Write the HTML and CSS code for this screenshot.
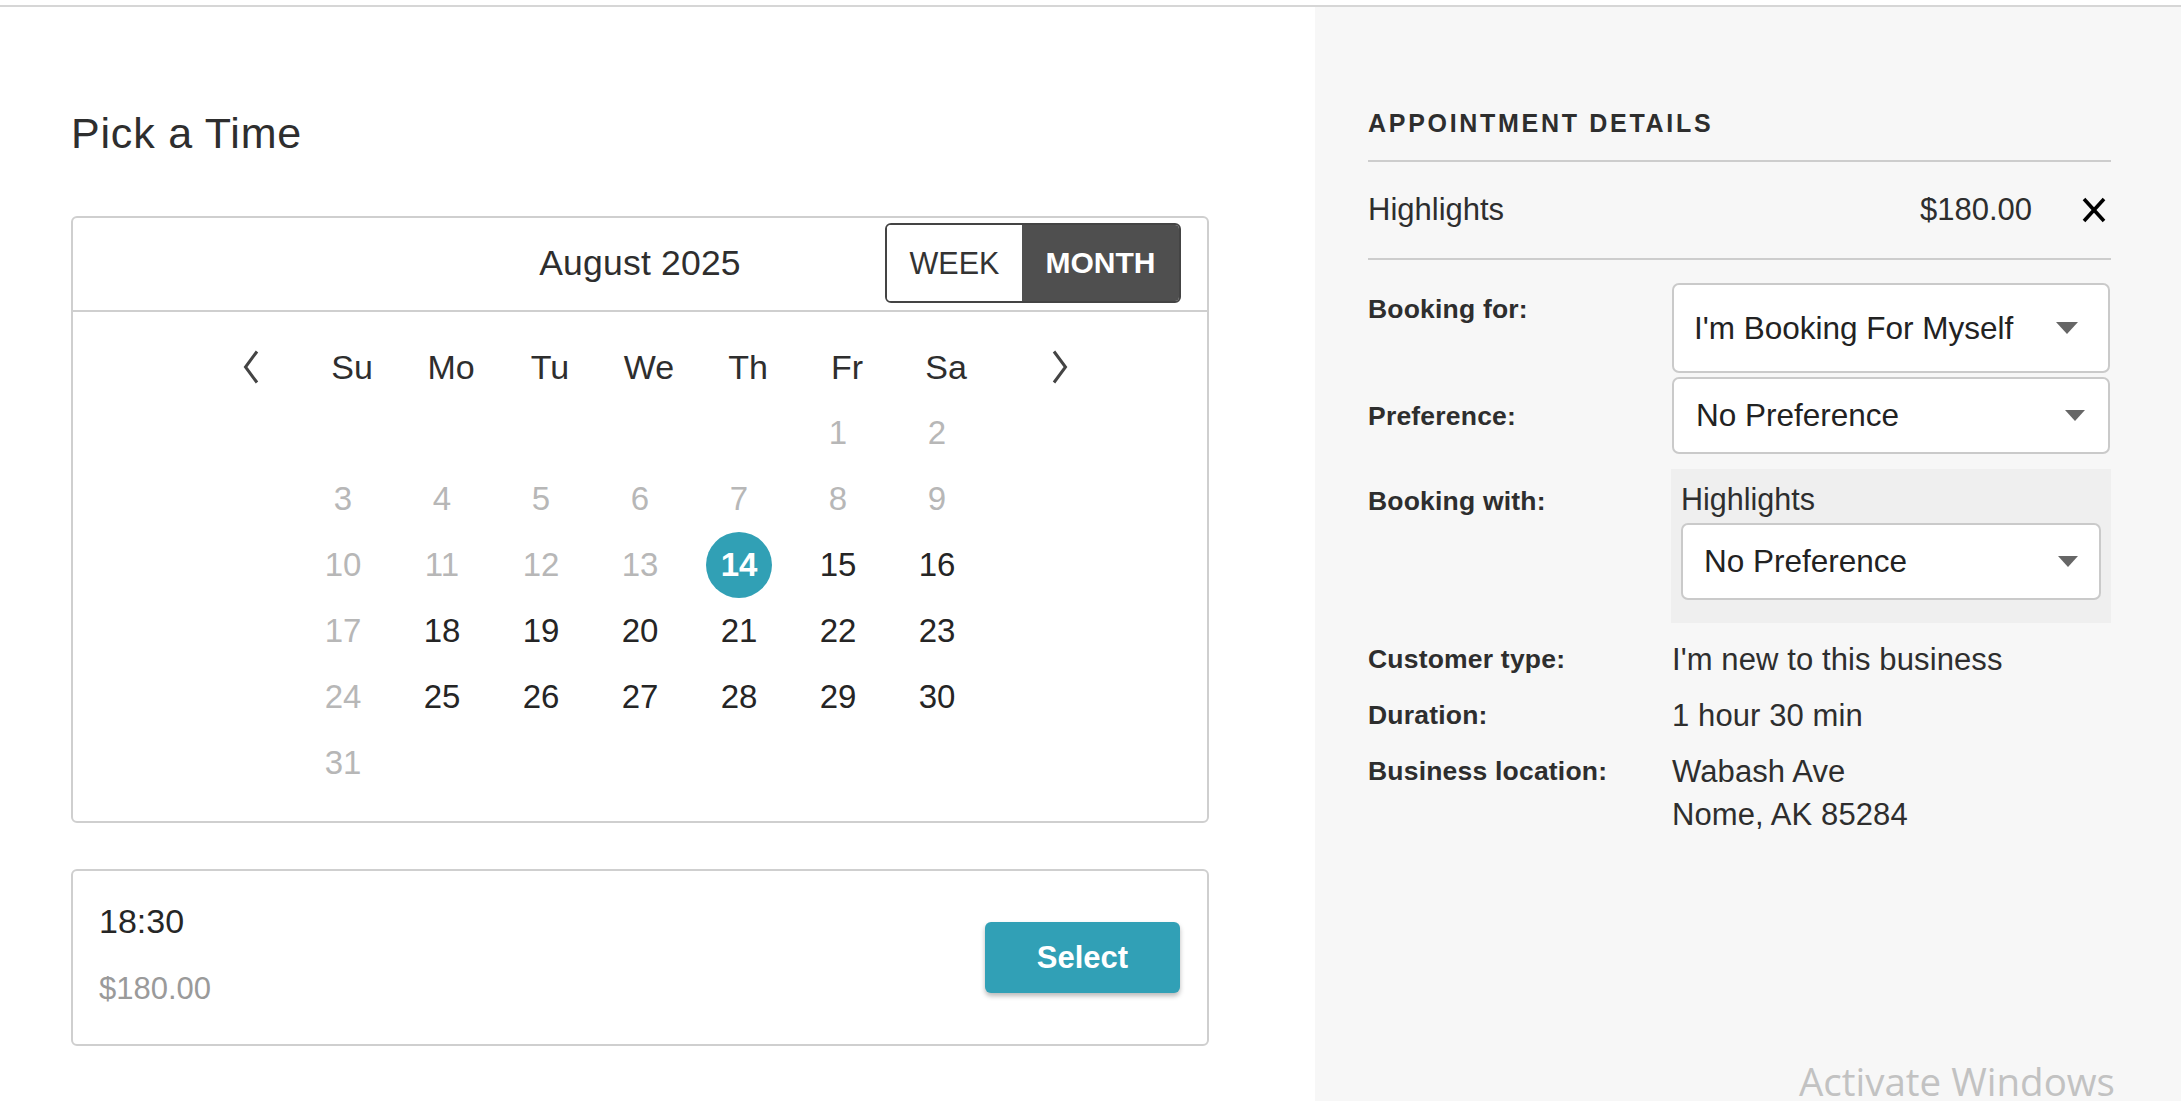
FILE: index.html
```html
<!DOCTYPE html>
<html lang="en">
<head>
<meta charset="utf-8">
<title>Pick a Time</title>
<link rel="stylesheet" href="styles.css">
</head>
<body>
<div class="topbar"></div>
<div class="page">
  <main class="left">
    <h1 class="title">Pick a Time</h1>
    <section class="calendar">
      <div class="cal-head">
        <div></div>
        <div class="month-label">August 2025</div>
        <div class="toggle">
          <span class="tg tg-week">WEEK</span>
          <span class="tg tg-month">MONTH</span>
        </div>
      </div>
      <div class="cal-body">
        <div class="dow-row">
          <div class="nav nav-prev"><svg width="16" height="34" viewBox="0 0 16 34"><polyline points="14,1.5 2.5,17 14,32.5" fill="none" stroke="#444" stroke-width="3"/></svg></div>
          <div class="dow">Su</div>
          <div class="dow">Mo</div>
          <div class="dow">Tu</div>
          <div class="dow">We</div>
          <div class="dow">Th</div>
          <div class="dow">Fr</div>
          <div class="dow">Sa</div>
          <div class="nav nav-next"><svg width="16" height="34" viewBox="0 0 16 34"><polyline points="2,1.5 13.5,17 2,32.5" fill="none" stroke="#444" stroke-width="3"/></svg></div>
        </div>
        <div class="dates">
          <span class="d"></span><span class="d"></span><span class="d"></span><span class="d"></span><span class="d"></span>
          <span class="d off">1</span><span class="d off">2</span>
          <span class="d off">3</span><span class="d off">4</span><span class="d off">5</span><span class="d off">6</span><span class="d off">7</span><span class="d off">8</span><span class="d off">9</span>
          <span class="d off">10</span><span class="d off">11</span><span class="d off">12</span><span class="d off">13</span><span class="d sel"><span class="sel-dot">14</span></span><span class="d on">15</span><span class="d on">16</span>
          <span class="d off">17</span><span class="d on">18</span><span class="d on">19</span><span class="d on">20</span><span class="d on">21</span><span class="d on">22</span><span class="d on">23</span>
          <span class="d off">24</span><span class="d on">25</span><span class="d on">26</span><span class="d on">27</span><span class="d on">28</span><span class="d on">29</span><span class="d on">30</span>
          <span class="d off">31</span>
        </div>
      </div>
    </section>
    <section class="slot">
      <div class="slot-text">
        <div class="slot-time">18:30</div>
        <div class="slot-price">$180.00</div>
      </div>
      <span class="select-btn">Select</span>
    </section>
  </main>
  <aside class="right">
    <h2 class="ad-title">APPOINTMENT DETAILS</h2>
    <div class="rule"></div>
    <div class="item">
      <span class="item-name">Highlights</span>
      <span class="item-price">$180.00</span>
      <svg class="item-x" width="24" height="26" viewBox="0 0 24 26"><line x1="2" y1="2" x2="22" y2="24" stroke="#000" stroke-width="3.6"/><line x1="22" y1="2" x2="2" y2="24" stroke="#000" stroke-width="3.6"/></svg>
    </div>
    <div class="rule"></div>
    <div class="form">
      <div class="frow frow-1">
        <div class="flabel lab-1">Booking for:</div>
        <div class="fsel sel-1"><span>I'm Booking For Myself</span><span class="caret"></span></div>
      </div>
      <div class="frow frow-2">
        <div class="flabel lab-2">Preference:</div>
        <div class="fsel sel-2"><span>No Preference</span><span class="caret caret-sm"></span></div>
      </div>
      <div class="frow frow-3">
        <div class="flabel lab-3">Booking with:</div>
        <div class="with-box">
          <div class="with-name">Highlights</div>
          <div class="fsel sel-3"><span>No Preference</span><span class="caret caret-sm"></span></div>
        </div>
      </div>
      <div class="frow info first-info">
        <div class="flabel">Customer type:</div>
        <div class="fval">I'm new to this business</div>
      </div>
      <div class="frow info">
        <div class="flabel">Duration:</div>
        <div class="fval">1 hour 30 min</div>
      </div>
      <div class="frow info">
        <div class="flabel">Business location:</div>
        <div class="fval">Wabash Ave<br>Nome, AK 85284</div>
      </div>
    </div>
  </aside>
</div>
<div class="watermark">Activate Windows</div>
</body>
</html>
```

FILE: styles.css
```css
* { box-sizing: border-box; }
html, body {
  margin: 0;
  padding: 0;
  width: 2181px;
  height: 1101px;
  overflow: hidden;
  background: #fff;
  font-family: "Liberation Sans", Arial, sans-serif;
  color: #2e2e2e;
}
.topbar {
  height: 7px;
  background: #fff;
  border-bottom: 2px solid #d6d6d6;
}
.page {
  display: flex;
  height: 1094px;
}
.left {
  width: 1315px;
  flex: none;
  padding-left: 71px;
  background: #fff;
}
.title {
  margin: 101px 0 0 0;
  font-size: 43px;
  letter-spacing: 0.8px;
  font-weight: 400;
  line-height: 50px;
  color: #2e2e2e;
}
.calendar {
  margin-top: 58px;
  width: 1138px;
  border: 2px solid #cfcfcf;
  border-radius: 6px;
}
.cal-head {
  display: grid;
  grid-template-columns: 1fr auto 1fr;
  align-items: center;
  padding: 5px 26px 7px 26px;
  border-bottom: 2px solid #cfcfcf;
}
.month-label {
  font-size: 35.5px;
  letter-spacing: 0.2px;
  line-height: 40px;
  color: #2e2e2e;
}
.toggle {
  justify-self: end;
  display: flex;
  height: 80px;
  border: 2px solid #444;
  border-radius: 6px;
  overflow: hidden;
}
.tg {
  display: flex;
  align-items: center;
  justify-content: center;
  font-size: 30px;
  line-height: 36px;
}
.tg-week {
  width: 135px;
  background: #fff;
  color: #333;
  font-size: 30.5px;
}
.tg-month {
  width: 157px;
  background: #4f4f4f;
  color: #fff;
  font-weight: 700;
}
.cal-body {
  display: flex;
  flex-direction: column;
  align-items: center;
  padding: 22px 0 25px 0;
}
.dow-row {
  display: grid;
  grid-template-columns: 105px repeat(7, 99px) 105px;
  height: 66px;
  margin-left: 18px;
  align-items: center;
}
.dow {
  text-align: center;
  font-size: 34px;
  line-height: 66px;
  color: #2e2e2e;
}
.nav {
  display: flex;
  align-items: center;
  height: 66px;
}
.nav svg { display: block; }
.nav-prev { padding-left: 45px; }
.nav-next { padding-left: 56px; }
.dates {
  display: grid;
  grid-template-columns: repeat(7, 99px);
  grid-auto-rows: 66px;
}
.d {
  display: flex;
  align-items: center;
  justify-content: center;
  font-size: 33px;
  line-height: 66px;
}
.d.off { color: #b7b7b7; }
.d.on { color: #252525; }
.sel-dot {
  width: 66px;
  height: 66px;
  border-radius: 50%;
  background: #31a0b5;
  color: #fff;
  font-weight: 700;
  display: flex;
  align-items: center;
  justify-content: center;
}
.slot {
  margin-top: 46px;
  width: 1138px;
  height: 177px;
  border: 2px solid #cfcfcf;
  border-radius: 6px;
  display: flex;
  justify-content: space-between;
  align-items: center;
  padding: 0 27px 0 26px;
}
.slot-text {
  align-self: flex-start;
  padding-top: 28px;
}
.slot-time {
  font-size: 34px;
  line-height: 44px;
  color: #262626;
}
.slot-price {
  margin-top: 24px;
  font-size: 31px;
  line-height: 44px;
  color: #9a9a9a;
}
.select-btn {
  width: 195px;
  height: 71px;
  border-radius: 6px;
  background: #31a0b6;
  color: #fff;
  font-weight: 700;
  font-size: 31px;
  display: flex;
  align-items: center;
  justify-content: center;
  box-shadow: 0 3px 5px rgba(0, 0, 0, 0.28);
}
.right {
  flex: 1;
  background: #f7f7f7;
  padding: 101px 70px 0 53px;
}
.ad-title {
  margin: 0 0 22px 0;
  font-size: 25px;
  font-weight: 700;
  letter-spacing: 2.7px;
  line-height: 30px;
  color: #2e2e2e;
}
.rule {
  height: 2px;
  background: #cdcdcd;
}
.item {
  display: flex;
  align-items: center;
  padding: 30px 0 30px 0;
  font-size: 31px;
  line-height: 36px;
  color: #2e2e2e;
}
.item-name { flex: 1; }
.item-x {
  display: block;
  margin-left: 50px;
  margin-right: 5px;
}
.form { padding-top: 23px; }
.frow {
  display: flex;
  align-items: flex-start;
}
.flabel {
  width: 304px;
  flex: none;
  font-size: 26.5px;
  letter-spacing: 0.2px;
  font-weight: 700;
  line-height: 36px;
  color: #2e2e2e;
}
.lab-1 { padding-top: 8px; }
.frow-2 { margin-top: 4px; align-items: center; }
.frow-3 { margin-top: 15px; }
.lab-3 { padding-top: 14px; }
.fsel {
  display: flex;
  align-items: center;
  justify-content: space-between;
  background: #fff;
  border: 2px solid #cacaca;
  border-radius: 7px;
  font-size: 31.5px;
  color: #222;
}
.sel-1 {
  width: 438px;
  height: 90px;
  padding: 0 30px 0 20px;
}
.sel-2 {
  width: 438px;
  height: 77px;
  padding: 0 23px 0 22px;
}
.caret {
  width: 0;
  height: 0;
  border-left: 11px solid transparent;
  border-right: 11px solid transparent;
  border-top: 12px solid #666;
}
.caret-sm {
  border-left-width: 10.5px;
  border-right-width: 10.5px;
  border-top-width: 11px;
}
.with-box {
  width: 440px;
  margin-left: -1px;
  background: #efefef;
  padding: 12px 10px 23px 10px;
}
.with-name {
  font-size: 30.5px;
  line-height: 36px;
  margin-bottom: 6px;
  color: #2e2e2e;
}
.sel-3 {
  width: 420px;
  height: 77px;
  padding: 0 21px 0 21px;
}
.info {
  margin-top: 13px;
}
.first-info { margin-top: 15px; }
.info .flabel { line-height: 43px; }
.fval {
  font-size: 31px;
  letter-spacing: 0.1px;
  line-height: 43px;
  color: #2e2e2e;
}
.watermark {
  position: absolute;
  left: 1799px;
  top: 1062px;
  font-family: "Open Sans", "Noto Sans", sans-serif;
  font-size: 38.5px;
  line-height: 39px;
  color: #c2c2c2;
  white-space: nowrap;
}
```
